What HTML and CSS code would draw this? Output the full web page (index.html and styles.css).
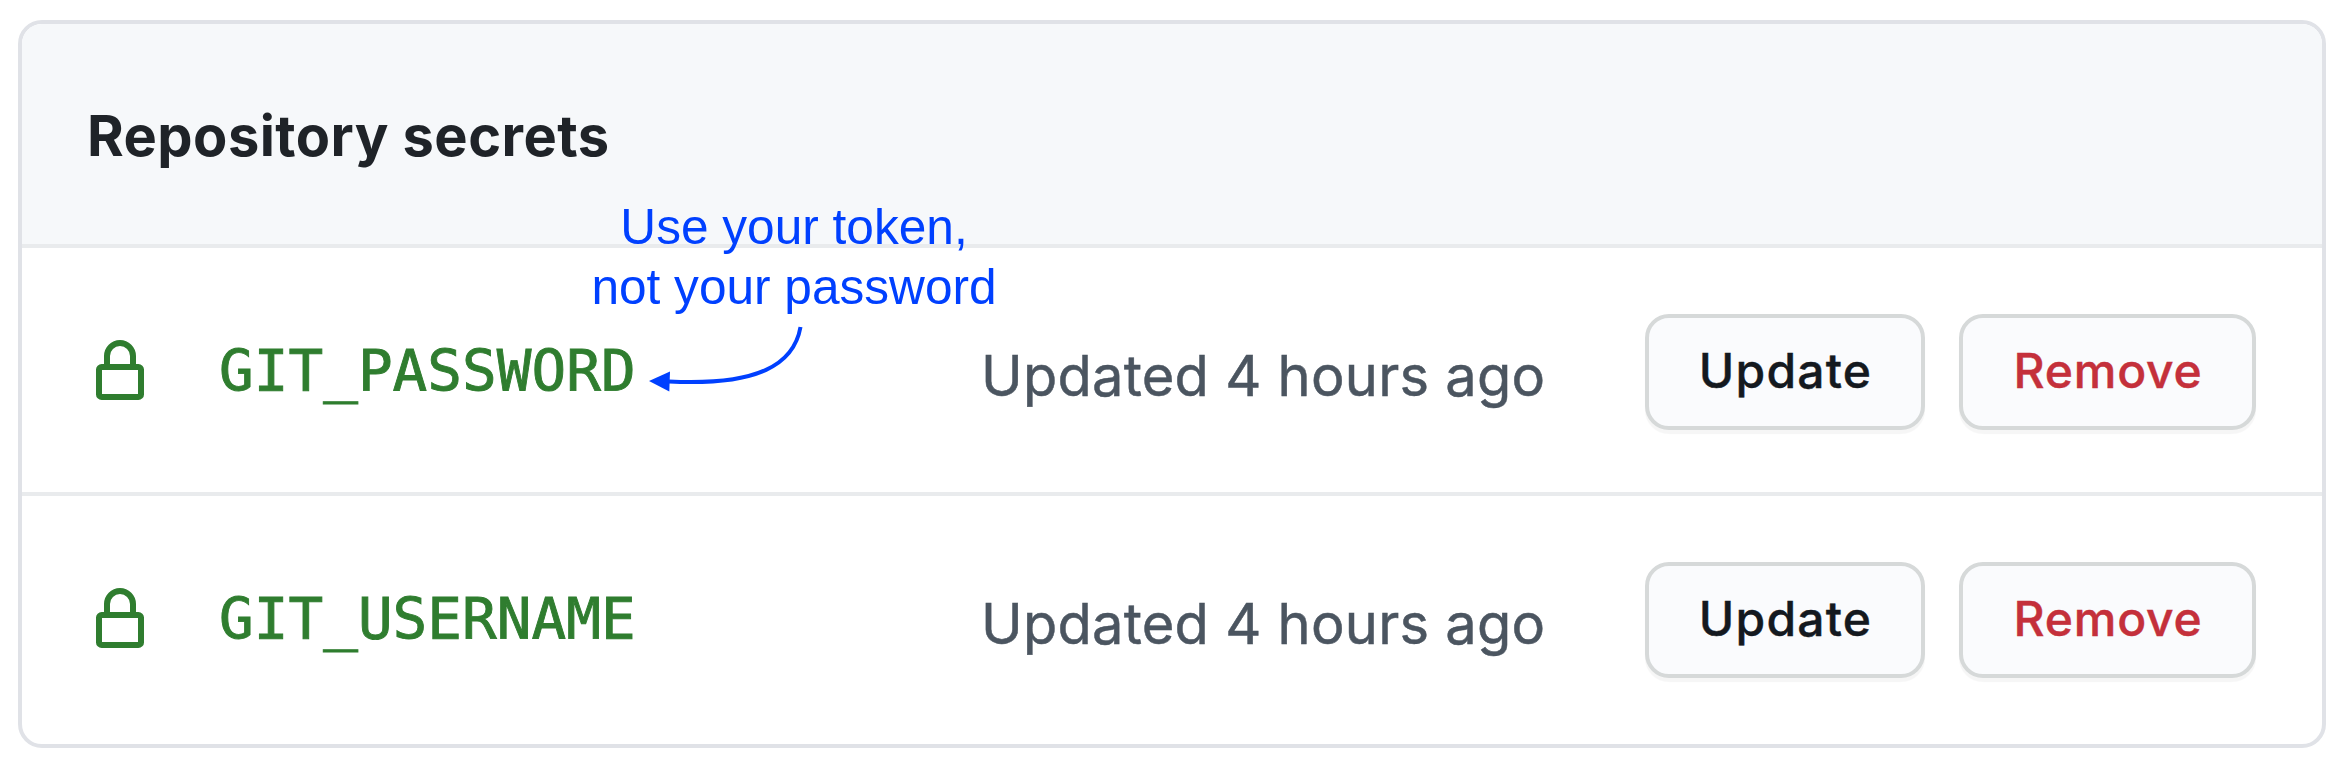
FILE: index.html
```html
<!DOCTYPE html>
<html lang="en">
<head>
<meta charset="utf-8">
<title>Repository secrets</title>
<link rel="stylesheet" href="styles.css">
</head>
<body>
<section class="card">
  <header class="card-header"><h2 class="title">Repository secrets</h2></header>
  <div class="row">
    <svg class="lock" viewBox="0 0 16 16" aria-hidden="true"><path fill-rule="evenodd" d="M4 4v2h-.6A1.4 1.4 0 002 7.4v6.2A1.4 1.4 0 003.400 15h9.200A1.400 1.400 0 0014 13.600v-6.200A1.400 1.400 0 0012.600 6H12V4a4 4 0 10-8 0zm6.500 2V4a2.500 2.500 0 00-5 0v2h5zM12.500 7.500v6h-9v-6h9z"/></svg>
    <code class="name">GIT_PASSWORD</code>
    <span class="date">Updated 4 hours ago</span>
    <div class="actions">
      <button class="btn btn-update">Update</button>
      <button class="btn btn-remove">Remove</button>
    </div>
  </div>
  <div class="row">
    <svg class="lock" viewBox="0 0 16 16" aria-hidden="true"><path fill-rule="evenodd" d="M4 4v2h-.6A1.4 1.4 0 002 7.4v6.2A1.4 1.4 0 003.400 15h9.200A1.400 1.400 0 0014 13.600v-6.200A1.400 1.400 0 0012.600 6H12V4a4 4 0 10-8 0zm6.500 2V4a2.500 2.500 0 00-5 0v2h5zM12.500 7.500v6h-9v-6h9z"/></svg>
    <code class="name">GIT_USERNAME</code>
    <span class="date">Updated 4 hours ago</span>
    <div class="actions">
      <button class="btn btn-update">Update</button>
      <button class="btn btn-remove">Remove</button>
    </div>
  </div>
  <div class="note">Use your token,<br>not your password
    <svg class="arrow" viewBox="0 0 160 72" aria-hidden="true"><path d="M155.500 7C149 44 114 66 24 61.500" fill="none" stroke="#0040ff" stroke-width="4"/><path d="M4 61L25 51.500L24.300 71.500Z" fill="#0040ff"/></svg>
  </div>
</section>
</body>
</html>
```
FILE: styles.css
```css
body {
  margin: 0;
  padding: 20px 22px 16px 18px;
  background: #fff;
  font-family: Inter, "Liberation Sans", sans-serif;
}
.card {
  position: relative;
  box-sizing: border-box;
  height: 728px;
  border: 4px solid #e0e2e7;
  border-radius: 24px;
  background: #fff;
}
.card-header {
  box-sizing: border-box;
  height: 220px;
  padding: 76px 66px 0 65px;
  border-radius: 20px 20px 0 0;
  background: #f6f8fa;
}
.title {
  margin: 0;
  font-size: 56px;
  line-height: 72px;
  font-weight: 650;
  letter-spacing: 0.450px;
  color: #1f2328;
}
.row {
  box-sizing: border-box;
  height: 248px;
  border-top: 4px solid #e9ebed;
  padding: 66px 66px 0;
  display: grid;
  grid-template-columns: 131px 762px 664px 1fr;
  align-items: center;
  align-content: start;
}
.lock {
  width: 64px;
  height: 64px;
  fill: #2f7d2f;
}
.name {
  font: 57.600px/80px "DejaVu Sans Mono", monospace;
  letter-spacing: 0.050px;
  color: #2f7d2f;
  -webkit-text-stroke: 0.900px #2f7d2f;
}
.date {
  padding-top: 8px;
  font-size: 56px;
  line-height: 72px;
  letter-spacing: 0.250px;
  color: #4b5560;
  -webkit-text-stroke: 0.500px #4b5560;
}
.actions {
  display: flex;
  justify-content: flex-end;
  gap: 34px;
}
.btn {
  box-sizing: border-box;
  width: 280px;
  height: 116px;
  padding: 0 0 2px;
  border: 4px solid #d6d9d9;
  border-radius: 24px;
  background: #fafbfd;
  box-shadow: 0 4px 1px rgba(27, 31, 36, 0.040);
  font: 500 48px/80px Inter, "Liberation Sans", sans-serif;
  letter-spacing: 1.200px;
  text-indent: 1px;
  color: #14191f;
  -webkit-text-stroke: 0.400px currentColor;
}
.btn-remove {
  width: 297px;
  letter-spacing: 0.800px;
  color: #c4303b;
}
/* Callout laid over the table */
.note {
  position: absolute;
  left: 552px;
  top: 173px;
  width: 440px;
  font: 49.600px/60px "Liberation Sans", Arial, sans-serif;
  text-align: center;
  color: #0040ff;
}
.arrow {
  position: absolute;
  left: 71px;
  top: 123px;
  width: 160px;
  height: 72px;
}
```
